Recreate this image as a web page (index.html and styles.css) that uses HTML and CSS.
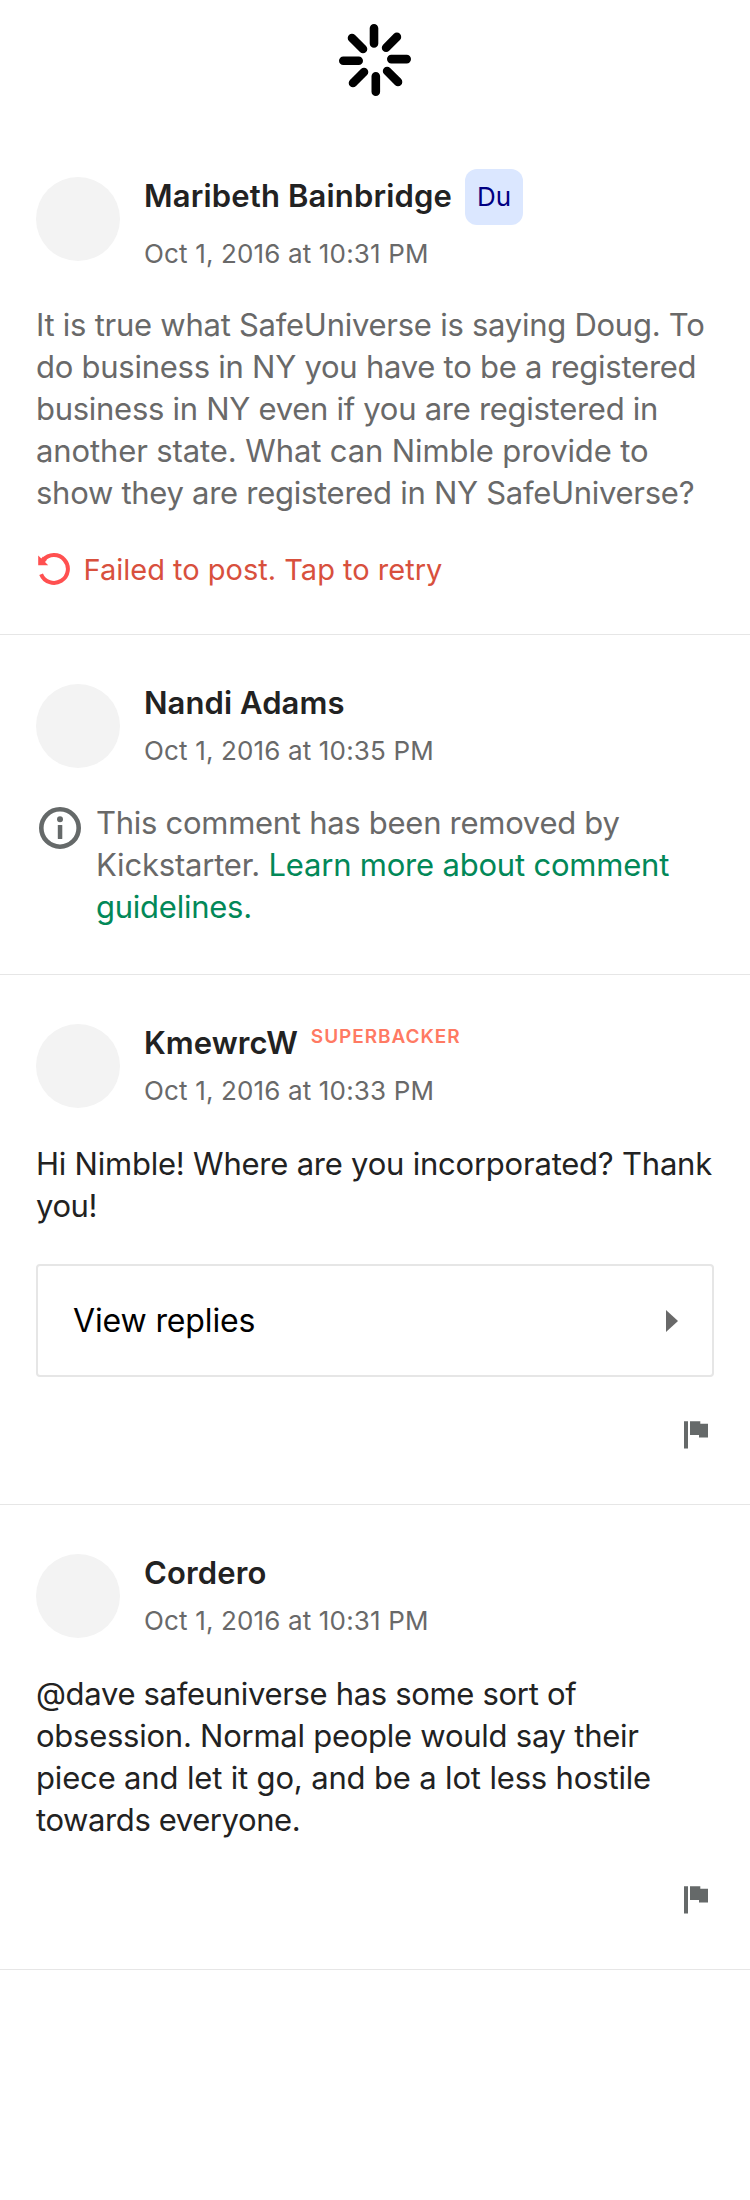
FILE: index.html
```
<!DOCTYPE html>
<html lang="en">
<head>
<meta charset="utf-8">
<meta name="viewport" content="width=device-width">
<title>Comments</title>
<link rel="stylesheet" href="styles.css">
</head>
<body>
<div class="loading">
  <svg class="spinner" width="74" height="74" viewBox="338 23 74 74" aria-hidden="true">
    <path d="M374 28.3V43.5M396.9 36.9L386.1 47.7M406.7 59.1H391.3M398 81.9L387.1 71M375.8 91.7V76.3M353 83L364 72M343.3 60.7H358.7M352 38L363 49"/>
  </svg>
</div>

<article class="comment">
  <header class="author">
    <span class="avatar avatar-low"></span>
    <div class="meta">
      <div class="name-row name-row-you"><h2 class="name name-wide">Maribeth Bainbridge</h2><span class="you">Du</span></div>
      <time class="date">Oct 1, 2016 at 10:31 PM</time>
    </div>
  </header>
  <p class="body muted"><span class="line t26">It is true what SafeUniverse is saying Doug. To</span> <span class="line t25">do business in NY you have to be a registered</span> <span class="line t28">business in NY even if you are registered in</span> <span class="line t11">another state. What can Nimble provide to</span> <span class="line t28">show they are registered in NY SafeUniverse?</span></p>
  <div class="retry">
    <svg class="retry-icon" width="34" height="34" viewBox="37 552 34 34" aria-hidden="true">
      <path class="retry-arc" d="M41.1 574.2A13.9 13.9 0 1 0 43.2 560.2"/>
      <path class="retry-head" d="M38.2 555.6V565.2H48.2L45 562L47 559.8L43 556.6L41.3 558.6Z"/>
    </svg>
    <span class="retry-text">Failed to post. Tap to retry</span>
  </div>
</article>

<article class="comment comment-removed">
  <header class="author">
    <span class="avatar"></span>
    <div class="meta">
      <div class="name-row"><h2 class="name">Nandi Adams</h2></div>
      <time class="date">Oct 1, 2016 at 10:35 PM</time>
    </div>
  </header>
  <div class="notice">
    <svg class="info-icon" width="42" height="42" viewBox="0 0 42 42" aria-hidden="true">
      <circle class="info-ring" cx="21" cy="21" r="18.7"/>
      <circle cx="21" cy="12.2" r="3"/>
      <rect x="18.8" y="18" width="4.5" height="14" rx=".6"/>
    </svg>
    <p class="notice-text muted"><span class="line t28">This comment has been removed by</span> <span class="line t20">Kickstarter. <a class="link">Learn more about comment</a></span> <a class="line link t25">guidelines.</a></p>
  </div>
</article>

<article class="comment comment-flaggable">
  <header class="author">
    <span class="avatar"></span>
    <div class="meta">
      <div class="name-row"><h2 class="name">KmewrcW</h2><span class="superbacker">SUPERBACKER</span></div>
      <time class="date">Oct 1, 2016 at 10:33 PM</time>
    </div>
  </header>
  <p class="body"><span class="line t22">Hi Nimble! Where are you incorporated? Thank</span> <span class="line t40">you!</span></p>
  <div class="replies">
    <span>View replies</span>
    <svg width="12" height="22" viewBox="0 0 12 22" aria-hidden="true"><path class="arrow" d="M0 0L12 11L0 22Z"/></svg>
  </div>
  <div class="actions">
    <svg class="flag" width="24" height="28" viewBox="0 0 24 28" aria-hidden="true"><path d="M0 .3H4V27.5H0ZM6 .3H16.3V2.8H24V16.6H15V14H6Z"/></svg>
  </div>
</article>

<article class="comment comment-flaggable">
  <header class="author">
    <span class="avatar"></span>
    <div class="meta">
      <div class="name-row"><h2 class="name name-wide">Cordero</h2></div>
      <time class="date">Oct 1, 2016 at 10:31 PM</time>
    </div>
  </header>
  <p class="body"><span class="line t32">@dave safeuniverse has some sort of</span> <span class="line t25">obsession. Normal people would say their</span> <span class="line t16">piece and let it go, and be a lot less hostile</span> <span class="line t40">towards everyone.</span></p>
  <div class="actions actions-last">
    <svg class="flag" width="24" height="28" viewBox="0 0 24 28" aria-hidden="true"><path d="M0 .3H4V27.5H0ZM6 .3H16.3V2.8H24V16.6H15V14H6Z"/></svg>
  </div>
</article>
</body>
</html>
```
FILE: styles.css
```
* { box-sizing: border-box; }
body {
  margin: 0;
  background: #fff;
  color: #222;
  font-family: Inter, "Liberation Sans", sans-serif;
}
svg { display: block; flex: none; }
h2, p { margin: 0; }

.loading {
  display: flex;
  justify-content: center;
  height: 120px;
  padding-top: 23px;
}
.spinner path {
  fill: none;
  stroke: #000;
  stroke-width: 8.6;
  stroke-linecap: round;
}

.comment {
  padding: 49px 36px 45px;
  border-bottom: 1px solid #e6e6e6;
}
.comment-removed { padding-bottom: 46px; }
.comment-flaggable { padding-bottom: 55px; }

.author { display: flex; gap: 24px; }
.avatar {
  flex: none;
  width: 84px;
  height: 84px;
  border-radius: 50%;
  background: #f3f3f3;
}
.avatar-low { margin-top: 8px; }

.name-row { display: flex; gap: 13px; }
.name {
  font-size: 31px;
  font-weight: 600;
  line-height: 38px;
  letter-spacing: .07px;
  white-space: nowrap;
}
.name-wide { letter-spacing: .16px; }
.name-row-you { align-items: center; }
.name-row-you .name { padding-bottom: 2px; }
.you {
  width: 58px;
  height: 56px;
  border-radius: 12px;
  background: #dbe7ff;
  color: #000082;
  font-size: 26px;
  line-height: 56px;
  text-align: center;
}
.superbacker {
  padding-top: 1px;
  color: #ff7a63;
  font-size: 19px;
  font-weight: 600;
  line-height: 24px;
  letter-spacing: .95px;
}
.date {
  display: block;
  margin: 13px 0 -1px;
  color: #696969;
  font-size: 26px;
  line-height: 32px;
  letter-spacing: .15px;
}

.body {
  margin-top: 35px;
  font-size: 31px;
  line-height: 42px;
}
.muted { color: #696969; }
.line { display: block; white-space: nowrap; }
.link { color: #028858; }

.t11 { letter-spacing: -.11px; }
.t16 { letter-spacing: -.16px; }
.t20 { letter-spacing: -.2px; }
.t22 { letter-spacing: -.22px; }
.t25 { letter-spacing: -.25px; }
.t26 { letter-spacing: -.26px; }
.t28 { letter-spacing: -.28px; }
.t32 { letter-spacing: -.32px; }
.t40 { letter-spacing: -.4px; }

.retry {
  display: flex;
  align-items: center;
  gap: 12.5px;
  height: 40px;
  margin-top: 35px;
  padding-left: 1px;
  color: #d8503d;
  font-size: 29px;
  line-height: 40px;
}
.retry-text { padding-top: 2px; }
.retry-arc { fill: none; stroke: #ff5050; stroke-width: 4; }
.retry-head { fill: #ff5050; }

.notice {
  display: flex;
  align-items: flex-start;
  gap: 15px;
  margin-top: 34px;
  padding-left: 3px;
}
.notice-text { font-size: 31px; line-height: 42px; }
.info-icon { margin-top: 5px; fill: #656969; }
.info-ring { fill: none; stroke: #656969; stroke-width: 4.6; }

.replies {
  display: flex;
  align-items: center;
  justify-content: space-between;
  height: 113px;
  margin-top: 37px;
  padding: 0 34px 0 35px;
  border: 2px solid #e6e6e6;
  border-radius: 4px;
  color: #000;
  font-size: 32px;
  letter-spacing: -.13px;
}
.arrow { fill: #696969; }

.actions {
  display: flex;
  justify-content: flex-end;
  margin-top: 44px;
  padding-right: 6px;
}
.actions-last { margin-top: 45px; }
.flag { fill: #656969; }
```
